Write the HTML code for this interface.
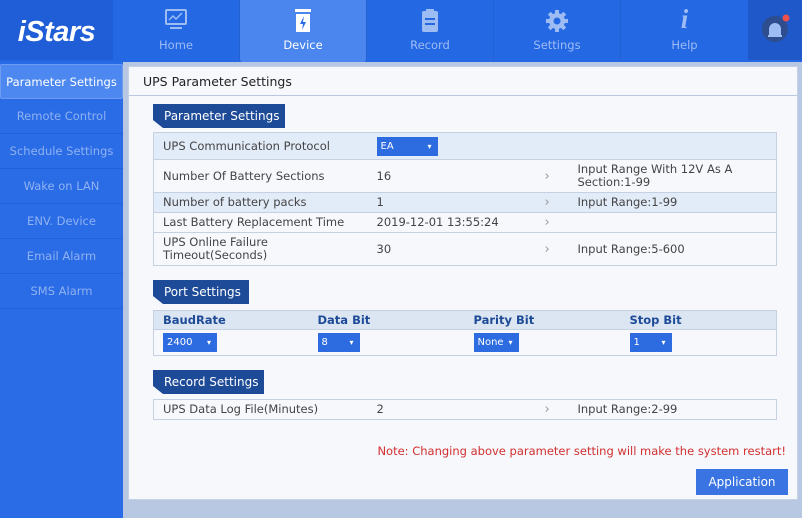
<!DOCTYPE html>
<html><head><meta charset="utf-8"><style>
*{margin:0;padding:0;box-sizing:border-box}
body{width:802px;height:518px;overflow:hidden;background:#b9c8e2;font-family:"DejaVu Sans","Liberation Sans",sans-serif;position:relative}
.hdr{position:absolute;left:0;top:0;width:802px;height:62px;background:#2568e3}
.logo{position:absolute;left:0;top:0;width:113px;height:60px;background:#1f5ed6;color:#fff;font:italic bold 29px "Liberation Sans",sans-serif;text-align:center;line-height:64px;letter-spacing:-0.5px}
.tab{position:absolute;top:0;width:127px;height:60px;text-align:center;color:#9dbcf3;font-size:11.5px;border-right:1px solid #2260d4}
.tab .t{position:absolute;top:38px;left:0;right:0}
.tab svg{position:absolute;left:50%;top:9px;transform:translateX(-50%)}
.tab.on{background:#4a86ee;color:#fff;height:62px;border-radius:0 0 3px 3px}
.bell{position:absolute;left:748px;top:0;width:54px;height:60px;background:#1f58c9}
.side{position:absolute;left:0;top:62px;width:123px;height:456px;background:#2a6be6}
.si{height:35px;line-height:35px;text-align:center;color:#8fb2f2;font-size:11.5px;border-bottom:1px solid #235fd6}
.si.on{background:#4c88ef;color:#fff;border:1px solid #6d9cf0;border-radius:2px}
.main{position:absolute;left:128px;top:66px;width:670px;height:434px;background:#f6f8fc;border:1px solid #c5d2e6}
.mh{height:29px;line-height:29px;padding-left:14px;font-size:12.5px;color:#222;border-bottom:1px solid #b8c8e0}
.tag{position:absolute;left:24px;height:24px;line-height:24px;background:#1e4b98;color:#fff;font-size:12px;padding-left:11px;clip-path:polygon(0 0,100% 0,100% 100%,10px 100%,0 16px)}
table{position:absolute;left:24px;width:624px;border-collapse:collapse;font-size:11.5px;color:#444}
td{border-top:1px solid #c5d1e2;padding:0 0 0 9px;vertical-align:middle;line-height:13px}
table{border:1px solid #c5d1e2}
.hl{background:#e2ebf8}
.ch{color:#999;padding-left:0;font-size:13px}
.sel{display:inline-block;background:#2d6be0;color:#fff;font-size:10px;height:19px;line-height:19px;padding-left:4px;position:relative}
.sel:after{content:"▾";position:absolute;right:6px;font-size:8px}
.ph td{background:#dce5f2;color:#1e4b98;font-weight:bold;height:19px}
.note{position:absolute;right:11px;top:377px;color:#d32f2f;font-size:11.5px}
.btn{position:absolute;left:567px;top:402px;width:92px;height:26px;background:#3a74e2;color:#fff;font-size:12px;text-align:center;line-height:26px}
</style></head><body>
<div class="hdr">
<div class="logo">iStars</div>
<div class="tab" style="left:113px"><svg width="24" height="22" viewBox="0 0 24 22"><rect x="2" y="1" width="20" height="14" rx="1" fill="none" stroke="#9dbcf3" stroke-width="2"/><path d="M5 11l4-4 3 3 6-6" fill="none" stroke="#9dbcf3" stroke-width="1.5"/><rect x="6" y="18" width="12" height="2" fill="#9dbcf3"/></svg><div class="t">Home</div></div>
<div class="tab on" style="left:240px"><svg width="20" height="24" viewBox="0 0 20 24"><rect x="2" y="0" width="16" height="3" fill="#fff"/><rect x="3" y="5" width="14" height="18" fill="#fff"/><path d="M11 7l-4 8h3l-1 6 4-8h-3z" fill="#2a6be6"/></svg><div class="t">Device</div></div>
<div class="tab" style="left:367px"><svg width="20" height="24" viewBox="0 0 20 24"><rect x="2" y="2" width="16" height="21" rx="2" fill="#9dbcf3"/><rect x="6" y="0" width="8" height="4" fill="#9dbcf3"/><rect x="5" y="9" width="10" height="2" fill="#2568e3"/><rect x="5" y="14" width="10" height="2" fill="#2568e3"/></svg><div class="t">Record</div></div>
<div class="tab" style="left:494px"><svg width="24" height="24" viewBox="0 0 24 24"><g fill="#9dbcf3"><circle cx="12" cy="12" r="8"/><rect x="10" y="1" width="4" height="22"/><rect x="1" y="10" width="22" height="4"/><rect x="10" y="1" width="4" height="22" transform="rotate(45 12 12)"/><rect x="10" y="1" width="4" height="22" transform="rotate(-45 12 12)"/></g><circle cx="12" cy="12" r="3.5" fill="#2568e3"/></svg><div class="t">Settings</div></div>
<div class="tab" style="left:621px;border:none"><div style="position:absolute;top:4px;left:0;right:0;font:italic bold 27px 'Liberation Serif',serif;color:#9dbcf3">i</div><div class="t">Help</div></div>
<div class="bell"><svg width="30" height="30" viewBox="0 0 30 30" style="position:absolute;left:12px;top:14px"><circle cx="15" cy="15" r="13" fill="#2d4d8e"/><path d="M9 21v-6a6 6 0 0112 0v6z" fill="#9dbcf3"/><rect x="8" y="21" width="14" height="2" fill="#9dbcf3"/><circle cx="26" cy="4" r="3.5" fill="#f0504a"/></svg></div>
</div>
<div class="side">
<div style="height:2px"></div>
<div class="si on">Parameter Settings</div><div class="si">Remote Control</div><div class="si">Schedule Settings</div><div class="si">Wake on LAN</div><div class="si">ENV. Device</div><div class="si">Email Alarm</div><div class="si">SMS Alarm</div>
</div>
<div class="main">
<div class="mh">UPS Parameter Settings</div>
<div class="tag" style="top:37px;width:132px">Parameter Settings</div>
<table style="top:65px">
<tr class="hl" style="height:27px"><td style="width:214px">UPS Communication Protocol</td><td style="width:177px"><span class="sel" style="width:61px">EA</span></td><td class="ch" style="width:24px"></td><td></td></tr>
<tr style="height:33px"><td>Number Of Battery Sections</td><td>16</td><td class="ch">›</td><td>Input Range With 12V As A Section:1-99</td></tr>
<tr class="hl" style="height:20px"><td>Number of battery packs</td><td>1</td><td class="ch">›</td><td>Input Range:1-99</td></tr>
<tr style="height:20px"><td>Last Battery Replacement Time</td><td>2019-12-01 13:55:24</td><td class="ch">›</td><td></td></tr>
<tr style="height:33px"><td>UPS Online Failure Timeout(Seconds)</td><td>30</td><td class="ch">›</td><td>Input Range:5-600</td></tr>
</table>
<div class="tag" style="top:213px;width:96px">Port Settings</div>
<table style="top:243px">
<tr class="ph"><td style="width:155px">BaudRate</td><td style="width:156px">Data Bit</td><td style="width:156px">Parity Bit</td><td>Stop Bit</td></tr>
<tr style="height:26px"><td><span class="sel" style="width:54px">2400</span></td><td><span class="sel" style="width:42px">8</span></td><td><span class="sel" style="width:45px">None</span></td><td><span class="sel" style="width:42px">1</span></td></tr>
</table>
<div class="tag" style="top:303px;width:111px">Record Settings</div>
<table style="top:332px">
<tr style="height:20px"><td style="width:214px">UPS Data Log File(Minutes)</td><td style="width:177px">2</td><td class="ch" style="width:24px">›</td><td>Input Range:2-99</td></tr>
</table>
<div class="note">Note: Changing above parameter setting will make the system restart!</div>
<div class="btn">Application</div>
</div>
</body></html>
